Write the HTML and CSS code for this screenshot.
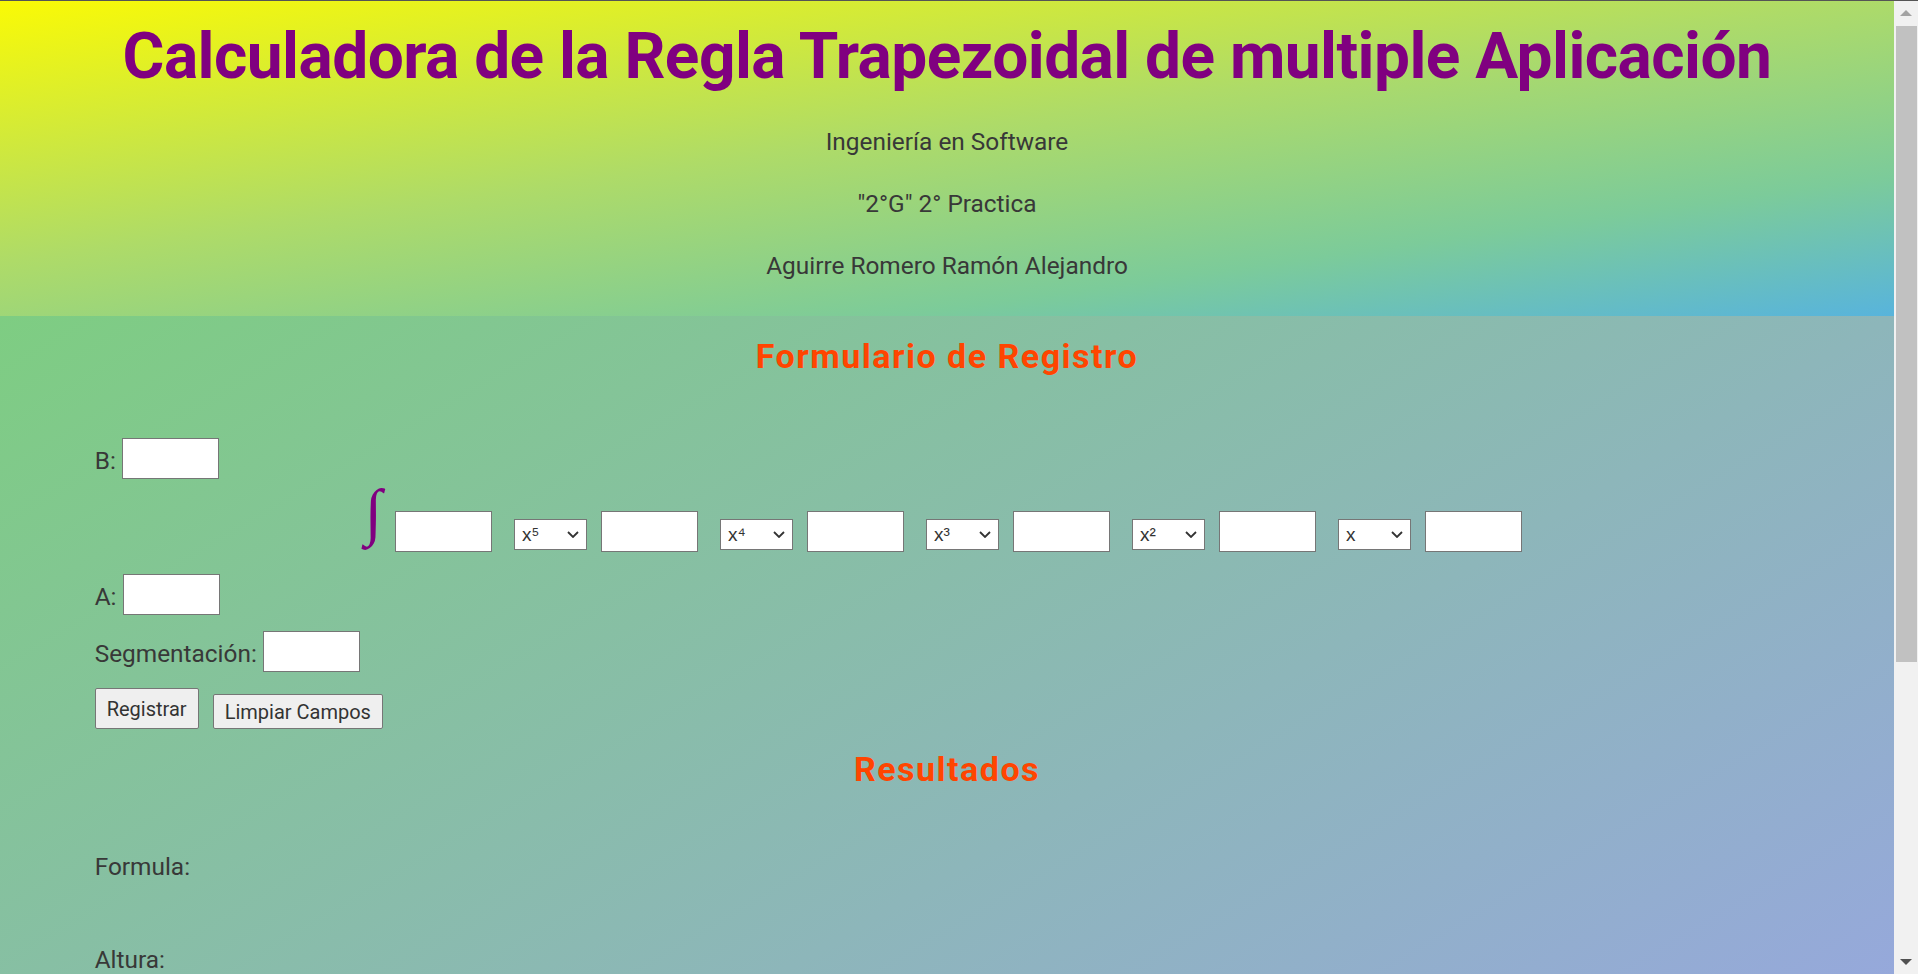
FILE: index.html
```html
<!DOCTYPE html>
<html lang="es">
<head>
<meta charset="utf-8">
<title>Calculadora de la Regla Trapezoidal de multiple Aplicación</title>
<link rel="stylesheet" href="styles.css">
</head>
<body>
<div class="page">
<header class="hero">
  <h1 class="title">Calculadora de la Regla Trapezoidal de multiple Aplicación</h1>
  <p class="hero-line">Ingeniería en Software</p>
  <p class="hero-line">"2°G" 2° Practica</p>
  <p class="hero-line">Aguirre Romero Ramón Alejandro</p>
</header>
<main class="content">
  <h2 class="section-title">Formulario de Registro</h2>
  <form class="form">
    <div class="row">
      <label class="row-label" for="b">B:</label>
      <input class="field" id="b" type="text">
    </div>
    <div class="integral">
      <span class="integral-sign">∫</span>
      <input class="field coef" type="text">
      <span class="select-wrap">
        <select class="power"><option>x⁵</option></select>
        <svg class="chev" width="12" height="7" viewBox="0 0 12 7"><path d="M1 1 L6 6 L11 1" fill="none" stroke="#333" stroke-width="1.8"/></svg>
      </span>
      <input class="field coef" type="text">
      <span class="select-wrap">
        <select class="power"><option>x⁴</option></select>
        <svg class="chev" width="12" height="7" viewBox="0 0 12 7"><path d="M1 1 L6 6 L11 1" fill="none" stroke="#333" stroke-width="1.8"/></svg>
      </span>
      <input class="field coef" type="text">
      <span class="select-wrap">
        <select class="power"><option>x³</option></select>
        <svg class="chev" width="12" height="7" viewBox="0 0 12 7"><path d="M1 1 L6 6 L11 1" fill="none" stroke="#333" stroke-width="1.8"/></svg>
      </span>
      <input class="field coef" type="text">
      <span class="select-wrap">
        <select class="power"><option>x²</option></select>
        <svg class="chev" width="12" height="7" viewBox="0 0 12 7"><path d="M1 1 L6 6 L11 1" fill="none" stroke="#333" stroke-width="1.8"/></svg>
      </span>
      <input class="field coef" type="text">
      <span class="select-wrap">
        <select class="power"><option>x</option></select>
        <svg class="chev" width="12" height="7" viewBox="0 0 12 7"><path d="M1 1 L6 6 L11 1" fill="none" stroke="#333" stroke-width="1.8"/></svg>
      </span>
      <input class="field coef" type="text">
    </div>
    <div class="row row-a">
      <label class="row-label" for="a">A:</label>
      <input class="field" id="a" type="text">
    </div>
    <div class="row row-seg">
      <label class="row-label" for="seg">Segmentación:</label>
      <input class="field" id="seg" type="text">
    </div>
    <div class="buttons">
      <button class="btn btn-main" type="button">Registrar</button>
      <button class="btn btn-clear" type="reset">Limpiar Campos</button>
    </div>
  </form>
  <h2 class="section-title results-title">Resultados</h2>
  <div class="results">
    <p class="result-line">Formula:</p>
    <p class="result-line">Altura:</p>
    <p class="result-line">Resultado:</p>
  </div>
</main>
</div>
<div class="scrollbar" aria-hidden="true">
  <span class="sb-up"></span>
  <span class="sb-thumb"></span>
  <span class="sb-space"></span>
  <span class="sb-down"></span>
</div>
</body>
</html>
```
FILE: styles.css
```css
* {
  box-sizing: border-box;
}

html,
body {
  margin: 0;
  padding: 0;
}

body {
  font-family: Roboto, "Liberation Sans", sans-serif;
  color: #383838;
  border-top: 1px solid #555555;
}

.page {
  margin-right: 24px;
}

.hero {
  background: linear-gradient(172deg, #fafa05 0%, #aedb68 45%, #7ccb9a 76%, #58b4dc 100%);
  padding: 18px 0 35px;
  text-align: center;
}

.title {
  margin: 0;
  font-size: 64px;
  line-height: 76px;
  font-weight: 700;
  letter-spacing: -0.55px;
  color: #800080;
}

.hero-line {
  margin: 32px 0 0;
  font-size: 24.4px;
  line-height: 30px;
}

.content {
  background: linear-gradient(to bottom right, #7ecd82, #9c9ff2);
  min-height: 1116px;
  padding: 20px 0 40px;
}

.section-title {
  margin: 0;
  text-align: center;
  color: #ff4500;
  font-size: 34px;
  line-height: 40px;
  font-weight: 700;
  letter-spacing: 1.5px;
}

.form {
  margin: 62px 5% 0;
}

.row {
  display: flex;
  align-items: flex-end;
  gap: 6px;
  font-size: 24.4px;
  line-height: 30px;
}

.row-label {
  padding-bottom: 3px;
}

.row-a {
  margin-top: 22px;
}

.row-seg {
  margin-top: 16px;
}

.field {
  width: 97px;
  height: 41px;
  margin: 0;
  padding: 0 4px;
  border: 1px solid #767676;
  border-radius: 0;
  background: #ffffff;
  font: inherit;
}

.integral {
  display: flex;
  align-items: flex-end;
  margin: 2px 0 0 270px;
}

.integral-sign {
  font-family: "Liberation Serif", serif;
  font-size: 63px;
  line-height: 62px;
  color: #800080;
  margin-right: 13px;
  margin-bottom: 9px;
}

.coef {
  width: 97px;
}

.select-wrap {
  position: relative;
  display: flex;
  margin: 0 14px 2px 22px;
}

.power {
  appearance: none;
  -webkit-appearance: none;
  width: 73px;
  height: 31px;
  margin: 0;
  padding: 0 0 0 7px;
  border: 1px solid #767676;
  border-radius: 0;
  background: #ffffff;
  color: #333333;
  font-family: "Liberation Sans", Arial, sans-serif;
  font-size: 19px;
}

.chev {
  position: absolute;
  right: 8px;
  top: 12px;
}

.buttons {
  display: flex;
  align-items: flex-end;
  gap: 14px;
  margin-top: 16px;
}

.btn {
  margin: 0;
  padding: 0 11px;
  border: 1px solid #767676;
  border-radius: 2px;
  background: #efefef;
  color: #333333;
  font-family: Roboto, "Liberation Sans", sans-serif;
  font-size: 20px;
}

.btn-main {
  height: 41px;
}

.btn-clear {
  height: 35px;
}

.results-title {
  margin-top: 20px;
}

.results {
  margin: 63px 5% 0;
}

.result-line {
  margin: 0 0 63px;
  font-size: 24.4px;
  line-height: 30px;
}

.scrollbar {
  position: fixed;
  top: 1px;
  right: 0;
  bottom: 0;
  width: 24px;
  background: #f1f1f1;
  display: flex;
  flex-direction: column;
  align-items: center;
  padding: 9px 0 9px;
}

.sb-up {
  width: 0;
  height: 0;
  border-left: 6px solid transparent;
  border-right: 6px solid transparent;
  border-bottom: 6px solid #a3a3a3;
}

.sb-thumb {
  align-self: flex-end;
  width: 21px;
  height: 636px;
  margin: 10px 1px 0 0;
  background: #c1c1c1;
}

.sb-space {
  flex: 1;
}

.sb-down {
  width: 0;
  height: 0;
  border-left: 6px solid transparent;
  border-right: 6px solid transparent;
  border-top: 6px solid #505050;
}
```
